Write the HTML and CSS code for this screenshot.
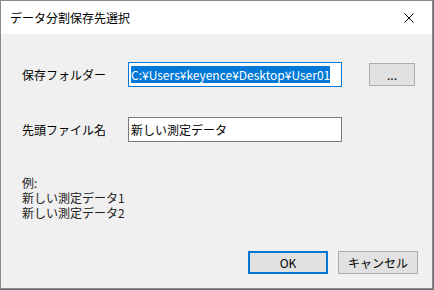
FILE: index.html
```html
<!DOCTYPE html>
<html lang="ja">
  <head>
    <meta charset="UTF-8" />
    <title>データ分割保存先選択</title>
    <link rel="stylesheet" href="styles.css">
  </head>
  <body>
    <div class="window">
      <div class="titlebar">
        <span class="title">データ分割保存先選択</span>
        <svg class="close" viewBox="0 0 10 10" width="10" height="10">
          <path d="M0.5 0.5 L9.5 9.5 M9.5 0.5 L0.5 9.5" stroke="#000" stroke-width="1" fill="none" />
        </svg>
      </div>
      <div class="client">
        <div class="row row-folder">
          <label class="label">保存フォルダー</label>
          <div class="textbox focused"><span class="selected">C:¥Users¥keyence¥Desktop¥User01</span></div>
          <button class="btn browse">...</button>
        </div>
        <div class="row row-name">
          <label class="label">先頭ファイル名</label>
          <div class="textbox">新しい測定データ</div>
        </div>
        <div class="example">
          <div>例:</div>
          <div>新しい測定データ1</div>
          <div>新しい測定データ2</div>
        </div>
        <div class="actions">
          <button class="btn default">OK</button>
          <button class="btn">キャンセル</button>
        </div>
      </div>
    </div>
  </body>
</html>
```

FILE: styles.css
```css
body {
  margin: 0;
  background: #6f6f6f;
  font-family: "Noto Sans CJK JP", "Noto Sans", sans-serif;
  font-size: 12px;
  color: #000000;
}

.window {
  width: 431px;
  height: 287px;
  border: 1px solid #8a8a8a;
  background: #f0f0f0;
  display: flex;
  flex-direction: column;
}

.titlebar {
  height: 33px;
  background: #ffffff;
  display: flex;
  align-items: center;
  justify-content: space-between;
  padding: 0 18px 0 9px;
}

.title {
  font-size: 12px;
}

.client {
  flex: 1;
  display: flex;
  flex-direction: column;
  padding: 28px 0 0 21px;
}

.row {
  display: flex;
  align-items: center;
}

.row-name {
  margin-top: 30px;
}

.label {
  width: 106px;
}

.textbox {
  width: 210px;
  height: 23px;
  border: 1px solid #7a7a7a;
  background: #ffffff;
  display: flex;
  align-items: center;
  padding-left: 2px;
  white-space: nowrap;
  overflow: hidden;
  font-size: 12px;
}

.textbox.focused {
  border-color: #0078d7;
}

.selected {
  background: #0078d7;
  color: #ffffff;
  line-height: 17px;
}

.btn {
  font-family: inherit;
  font-size: 12px;
  background: #e1e1e1;
  border: 1px solid #adadad;
  padding: 0;
  color: #000000;
}

.browse {
  width: 46px;
  height: 23px;
  margin-left: 27px;
  line-height: 14px;
}

.example {
  margin-top: 33px;
  line-height: 15px;
  color: #222222;
}

.actions {
  margin-top: auto;
  margin-bottom: 14px;
  display: flex;
  justify-content: flex-end;
  gap: 10px;
  padding-right: 14px;
}

.actions .btn {
  width: 80px;
  height: 23px;
}

.btn.default {
  border: 2px solid #0078d7;
}
```
